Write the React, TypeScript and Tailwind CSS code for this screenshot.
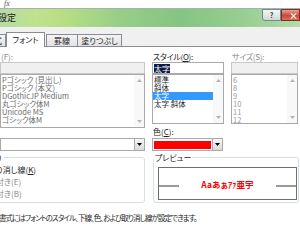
import React from "react"

function Tri({ up }: { up?: boolean }) {
    return (
        <svg width="5" height="3" viewBox="0 0 5 3" className="block">
            <path d={up ? "M0 3 L2.5 0 L5 3 Z" : "M0 0 L5 0 L2.5 3 Z"} fill="currentColor" />
        </svg>
    )
}

function ListBox({ items, selected, itemClass, className }: { items: string[]; selected?: number; itemClass: string; className: string }) {
    return (
        <div className={"flex border border-[#a9a9a9] bg-white overflow-hidden " + className}>
            <div className="flex-1 min-w-0 pt-px flex flex-col text-[7.5px]">
                {items.map((it, i) =>
                    i === selected ? (
                        <div key={it} className="h-[8px] leading-[8px] whitespace-nowrap pl-px bg-[#3399ff] text-white">
                            {it}
                        </div>
                    ) : (
                        <div key={it} className={"h-[8px] leading-[8px] whitespace-nowrap pl-px " + itemClass}>
                            {it}
                        </div>
                    )
                )}
            </div>
            <div className="w-[10px] shrink-0 bg-[#f8f8f8] flex flex-col items-center justify-between py-[4px] text-[#b4b4b4]">
                <Tri up />
                <Tri />
            </div>
        </div>
    )
}

function Combo({ children, className }: { children?: React.ReactNode; className: string }) {
    return (
        <div className={"flex border border-[#a9a9a9] bg-white " + className}>
            <div className="flex-1 flex items-center">{children}</div>
            <div className="w-[10px] shrink-0 border-l border-[#a9a9a9] bg-[linear-gradient(#f7f7f7,#dadada)] flex items-center justify-center text-black">
                <Tri />
            </div>
        </div>
    )
}

export default function App() {
    return (
        <div className="w-[300px] h-[235px] overflow-hidden bg-white flex flex-col font-['Noto_Sans_CJK_JP',sans-serif] [font-feature-settings:'palt'] text-[8px] leading-[10px] text-[#1e1e1e]">
            {/* formula bar strip */}
            <div className="h-[9px] shrink-0 bg-white border-b border-[#a9afb5] flex items-center pl-[4px]">
                <span className="font-['Liberation_Serif',serif] italic text-[8px] leading-[8px] text-[#555]">fx</span>
            </div>

            {/* title bar */}
            <div className="h-[18px] shrink-0 flex items-start justify-between bg-[linear-gradient(90deg,#b4dba5_0%,#bfe28c_12%,#b6de84_22%,#97ce86_40%,#84c582_60%,#95ce90_80%,#b3dcaa_100%)]">
                <span className="ml-[-2px] mt-[3px] text-[9px] leading-[12px] text-[#222]">設定</span>
                <div className="flex">
                    <div className="w-[19px] h-[12px] border border-[#71879a] rounded-bl-[3px] bg-[linear-gradient(#f4f8f4,#cfdccf)] flex items-center justify-center text-[7px] leading-[8px] text-[#333] font-bold">?</div>
                    <div className="w-[19px] h-[12px] border border-[#7a3026] bg-[linear-gradient(#e8a090,#c94a36_55%,#d8705a)] flex items-center justify-end pr-[1px] text-[9px] leading-[9px] text-white font-bold">×</div>
                </div>
            </div>

            {/* tab headers */}
            <div className="h-[20px] shrink-0 bg-[#f0f0f0] flex items-end border-b border-[#898c95]">
                <div className="ml-[-34px] w-[40px] h-[12px] border border-b-0 border-[#898c95] bg-[linear-gradient(#f4f4f4,#e2e2e2)] flex items-center justify-center whitespace-nowrap">表示形式</div>
                <div className="relative z-10 -mb-px w-[39px] h-[15px] border border-b-0 border-[#898c95] bg-white flex items-center justify-center">フォント</div>
                <div className="ml-px w-[32px] h-[12px] border border-b-0 border-[#898c95] bg-[linear-gradient(#f4f4f4,#e2e2e2)] flex items-center justify-center">罫線</div>
                <div className="w-[44px] h-[12px] border-t border-r border-[#898c95] bg-[linear-gradient(#f4f4f4,#e2e2e2)] flex items-center justify-center">塗りつぶし</div>
            </div>

            {/* tab page */}
            <div className="flex-1 bg-white flex flex-col">
                <div className="flex pt-[5px]">
                    {/* font name */}
                    <div className="w-[145px] shrink-0 flex flex-col">
                        <div className="h-[10px] pl-px text-[#8a8a8a]">(F):</div>
                        <div className="h-[12px] border border-[#c8c8c8] bg-[#f0f0f0]" />
                        <ListBox
                            className="h-[54px]"
                            itemClass="text-[#6a6a6a]"
                            items={["Pゴシック (見出し)", "Pゴシック (本文)", " DGothicJP Medium", "丸ゴシック体M", " Unicode MS", "ゴシック体M"]}
                        />
                        <Combo className="mt-[10px] h-[13px]" />
                    </div>

                    {/* style */}
                    <div className="ml-[7px] w-[72px] shrink-0 flex flex-col">
                        <div className="h-[10px] pl-px tracking-[-0.3px]">スタイル(<span className="underline">O</span>):</div>
                        <div className="h-[12px] border border-[#a9a9a9] bg-white flex items-center pl-px">
                            <span className="bg-[#101c4c] text-white leading-[9px]">太字</span>
                        </div>
                        <ListBox className="h-[50px]" itemClass="text-[#1e1e1e]" selected={2} items={["標準", "斜体", "太字", "太字 斜体"]} />
                        <div className="mt-[3px] h-[9px] leading-[9px] pl-px">色(<span className="underline">C</span>):</div>
                        <Combo className="mt-[2px] h-[13px] w-[71px]">
                            <div className="ml-px h-[8px] w-[57px] bg-[#ff0000]" />
                        </Combo>
                    </div>

                    {/* size */}
                    <div className="ml-[7px] w-[67px] shrink-0 flex flex-col">
                        <div className="h-[10px] pl-px text-[#8a8a8a] tracking-[-0.3px]">サイズ(S):</div>
                        <div className="h-[12px] border border-[#c8c8c8] bg-[#f0f0f0]" />
                        <ListBox className="h-[50px]" itemClass="text-[#9a9a9a]" items={["6", "8", "9", "10", "11", "12"]} />
                    </div>
                </div>

                {/* group boxes */}
                <div className="flex mt-[2px]">
                    <fieldset className="ml-[-36px] w-[181px] shrink-0 min-w-0 border border-[#d5dfe5] rounded-[3px] pb-px">
                        <legend className="ml-[4px] px-[2px] leading-[9px]">文字飾り</legend>
                        <div className="mt-[2px] pl-[23px] h-[12px] leading-[12px] whitespace-nowrap">取り消し線(<span className="underline">K</span>)</div>
                        <div className="pl-[23px] h-[12px] leading-[12px] whitespace-nowrap text-[#8a8a8a]">上付き(E)</div>
                        <div className="pl-[23px] h-[12px] leading-[12px] whitespace-nowrap text-[#8a8a8a]">下付き(B)</div>
                    </fieldset>
                    <fieldset className="ml-[8px] w-[146px] shrink-0 min-w-0 border border-[#d5dfe5] rounded-[3px] pb-[2px]">
                        <legend className="px-px leading-[9px]">プレビュー</legend>
                        <div className="mt-[5px] ml-[4px] mr-px h-[33px] border border-[#6e6e6e] flex items-center">
                            <div className="mt-[4px] w-[20px] h-[2px] bg-[#9a9a9a]" />
                            <div className="flex-1 text-center text-[8.5px] leading-[12px] font-bold text-[#ff0000] whitespace-nowrap">Aaあぁｱｧ亜宇</div>
                            <div className="mt-[4px] w-[20px] h-[2px] bg-[#9a9a9a]" />
                        </div>
                    </fieldset>
                </div>

                <div className="mt-[10px] ml-[-1px] text-[7.5px] tracking-[-0.95px] whitespace-nowrap">書式にはフォントのスタイル、下線、色、および取り消し線が設定できます。</div>
            </div>
        </div>
    )
}
